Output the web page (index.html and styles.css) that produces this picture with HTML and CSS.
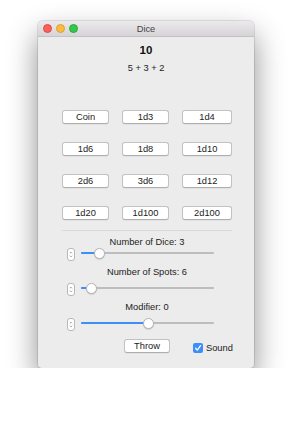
FILE: index.html
```html
<!DOCTYPE html>
<html lang="en">
<head>
    <meta charset="UTF-8">
    <title>Dice</title>
    <link rel="stylesheet" href="styles.css">
</head>
<body>
    <div class="window">
        <div class="titlebar">
            <div class="lights">
                <span class="light red"></span>
                <span class="light yellow"></span>
                <span class="light green"></span>
            </div>
            <div class="title">Dice</div>
            <div></div>
        </div>
        <div class="content">
            <div class="total">10</div>
            <div class="detail">5 + 3 + 2</div>

            <div class="dice-grid">
                <button>Coin</button>
                <button>1d3</button>
                <button>1d4</button>
                <button>1d6</button>
                <button>1d8</button>
                <button>1d10</button>
                <button>2d6</button>
                <button>3d6</button>
                <button>1d12</button>
                <button>1d20</button>
                <button>1d100</button>
                <button>2d100</button>
            </div>

            <div class="separator"></div>

            <div class="setting first">
                <div class="setting-label">Number of Dice: 3</div>
                <div class="setting-row">
                    <svg class="stepper" width="8" height="13" viewBox="0 0 8 13"><path d="M2.6 4.9 L4 3.5 L5.4 4.9 M2.6 8.1 L4 9.5 L5.4 8.1" fill="none" stroke="#555" stroke-width="0.8"/></svg>
                    <div class="slider">
                        <div class="fill" style="width: 18px"></div>
                        <div class="knob" style="left: 18px"></div>
                    </div>
                </div>
            </div>

            <div class="setting">
                <div class="setting-label">Number of Spots: 6</div>
                <div class="setting-row">
                    <svg class="stepper" width="8" height="13" viewBox="0 0 8 13"><path d="M2.6 4.9 L4 3.5 L5.4 4.9 M2.6 8.1 L4 9.5 L5.4 8.1" fill="none" stroke="#555" stroke-width="0.8"/></svg>
                    <div class="slider">
                        <div class="fill" style="width: 10px"></div>
                        <div class="knob" style="left: 10px"></div>
                    </div>
                </div>
            </div>

            <div class="setting">
                <div class="setting-label">Modifier: 0</div>
                <div class="setting-row">
                    <svg class="stepper" width="8" height="13" viewBox="0 0 8 13"><path d="M2.6 4.9 L4 3.5 L5.4 4.9 M2.6 8.1 L4 9.5 L5.4 8.1" fill="none" stroke="#555" stroke-width="0.8"/></svg>
                    <div class="slider">
                        <div class="fill" style="width: 67px"></div>
                        <div class="knob" style="left: 67px"></div>
                    </div>
                </div>
            </div>

            <div class="actions">
                <button class="throw">Throw</button>
                <label class="sound">
                    <span class="checkbox">
                        <svg width="8" height="8" viewBox="0 0 8 8"><path d="M1.6 4.3 L3.3 6.1 L6.5 1.6" fill="none" stroke="#fff" stroke-width="1.3" stroke-linecap="round" stroke-linejoin="round"/></svg>
                    </span>
                    Sound
                </label>
            </div>
        </div>
    </div>
</body>
</html>
```

FILE: styles.css
```css
body {
    margin: 0;
    padding: 0;
    background: #fff;
    font-family: 'Liberation Sans', Arial, sans-serif;
    color: #222;
}
.window {
    margin: 21px 0 0 38px;
    width: 216px;
    height: 347px;
    border-radius: 4px;
    overflow: hidden;
    background: #ececec;
    box-shadow: 0 14px 30px rgba(0, 0, 0, 0.45), 0 0 0 0.5px rgba(0, 0, 0, 0.2);
}
.titlebar {
    height: 15px;
    display: grid;
    grid-template-columns: 1fr auto 1fr;
    align-items: center;
    background: linear-gradient(#ebe9eb, #d6d4d6);
    border-bottom: 1px solid #c4c2c4;
}
.lights {
    display: flex;
    gap: 4px;
    padding-left: 5px;
}
.light {
    width: 9px;
    height: 9px;
    border-radius: 50%;
    box-sizing: border-box;
}
.red { background: #fc605b; border: 0.5px solid #de4a44; }
.yellow { background: #fdbc40; border: 0.5px solid #dea031; }
.green { background: #34c84a; border: 0.5px solid #27aa35; }
.title {
    font-size: 9.3px;
    color: #444;
}
.content {
    display: flex;
    flex-direction: column;
    align-items: center;
}
.total {
    margin-top: 6px;
    font-size: 11.5px;
    font-weight: bold;
    line-height: 14px;
    color: #111;
}
.detail {
    margin-top: 5px;
    font-size: 9.3px;
    line-height: 12px;
}
.dice-grid {
    margin-top: 36px;
    align-self: flex-start;
    margin-left: 24px;
    display: grid;
    grid-template-columns: 47px 47px 50px;
    column-gap: 13px;
    row-gap: 18px;
}
button {
    height: 14px;
    padding: 0;
    font-family: 'Liberation Sans', Arial, sans-serif;
    font-size: 9.3px;
    color: #222;
    background: #fff;
    border: 0.5px solid #c2c2c2;
    border-bottom-color: #aeaeae;
    border-radius: 3px;
    box-shadow: 0 0.5px 0.5px rgba(0, 0, 0, 0.08);
}
.separator {
    align-self: flex-start;
    margin: 10px 0 0 24px;
    width: 170px;
    height: 1px;
    background: #d9d9d9;
}
.setting {
    align-self: stretch;
    display: flex;
    flex-direction: column;
    align-items: center;
    margin-top: 6px;
}
.setting-label {
    font-size: 9.3px;
    line-height: 11px;
    padding-left: 2px;
}
.setting-row {
    align-self: stretch;
    display: flex;
    align-items: center;
    gap: 6px;
    padding-left: 29px;
    height: 14px;
    margin-top: 4px;
}
.setting.first .setting-row {
    margin-top: -1px;
}
.stepper {
    box-sizing: border-box;
    background: #fff;
    border: 0.5px solid #b8b8b8;
    border-radius: 3px;
}
.slider {
    position: relative;
    width: 133px;
    height: 2px;
    background: #bdbdbd;
    border-radius: 1px;
    margin-top: -2px;
}
.fill {
    height: 2px;
    background: #3d8ff7;
    border-radius: 1px;
}
.knob {
    position: absolute;
    top: -4.5px;
    width: 11px;
    height: 11px;
    margin-left: -5.5px;
    box-sizing: border-box;
    border-radius: 50%;
    background: #fff;
    border: 0.5px solid #b5b5b5;
    box-shadow: 0 0.5px 1px rgba(0, 0, 0, 0.2);
}
.actions {
    align-self: stretch;
    display: flex;
    align-items: center;
    padding-left: 86px;
    margin-top: 7px;
}
.throw {
    width: 46px;
}
.sound {
    display: flex;
    align-items: center;
    gap: 3px;
    margin-left: 23px;
    margin-top: 5px;
    font-size: 9.3px;
}
.checkbox {
    width: 10px;
    height: 10px;
    border-radius: 2px;
    background: #3d8ff7;
    display: flex;
    align-items: center;
    justify-content: center;
}
```
